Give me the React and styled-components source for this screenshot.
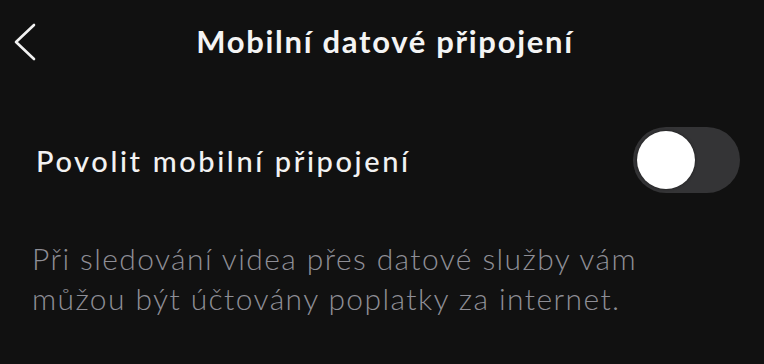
import React, {useState} from 'react'
import styled, {createGlobalStyle} from 'styled-components'

const GlobalStyle = createGlobalStyle`
    html, body {
        margin: 0;
        padding: 0;
        background: #111111;
    }
    body {
        font-family: Lato, "Noto Sans", sans-serif;
        color: #f2f2f2;
    }
`

const Screen = styled.div`
    width: 764px;
    height: 364px;
    background: #111111;
    display: flex;
    flex-direction: column;
    overflow: hidden;
`

const Header = styled.div`
    height: 82px;
    display: flex;
    align-items: center;
    justify-content: center;
    position: relative;
`

const BackButton = styled.button`
    position: absolute;
    left: 8px;
    top: 18px;
    background: none;
    border: 0;
    padding: 4px;
    cursor: pointer;
    display: flex;
`

const Title = styled.h1`
    margin: 0 0 0 6px;
    font-size: 31px;
    font-weight: 700;
    color: #f4f4f4;
    letter-spacing: 1.7px;
`

const Row = styled.div`
    display: flex;
    align-items: center;
    justify-content: space-between;
    padding: 0 24px 0 36px;
    height: 156px;
`

const RowLabel = styled.span`
    font-size: 29px;
    font-weight: 500;
    color: #f2f2f2;
    letter-spacing: 2.6px;
`

const Track = styled.button`
    width: 107px;
    height: 66px;
    border-radius: 33px;
    border: 0;
    padding: 4px;
    background: ${p => (p.on ? '#34c759' : '#343436')};
    display: flex;
    justify-content: ${p => (p.on ? 'flex-end' : 'flex-start')};
    align-items: center;
    cursor: pointer;
`

const Knob = styled.span`
    width: 58px;
    height: 58px;
    border-radius: 50%;
    background: #ffffff;
    box-shadow: 0 0 3px rgba(0, 0, 0, 0.5);
`

const Description = styled.p`
    margin: 0;
    padding: 0 82px 0 32px;
    font-size: 30px;
    font-weight: 300;
    line-height: 40px;
    letter-spacing: 1.4px;
    color: #8e8e96;
`

const BackIcon = () => (
    <svg width="24" height="40" viewBox="0 0 24 40" fill="none">
        <path d="M22 3 L4 20 L22 37" stroke="#f2f2f2" strokeWidth="2.6" strokeLinecap="round" strokeLinejoin="round"/>
    </svg>
)

const App = () => {
    const [enabled, setEnabled] = useState(false)

    return (
        <Screen>
            <GlobalStyle/>
            <Header>
                <BackButton aria-label="Zpět">
                    <BackIcon/>
                </BackButton>
                <Title>Mobilní datové připojení</Title>
            </Header>

            <Row>
                <RowLabel>Povolit mobilní připojení</RowLabel>
                <Track on={enabled} onClick={() => setEnabled(!enabled)}>
                    <Knob/>
                </Track>
            </Row>

            <Description>
                Při sledování videa přes datové služby vám můžou být účtovány poplatky za internet.
            </Description>
        </Screen>
    )
}

export default App
